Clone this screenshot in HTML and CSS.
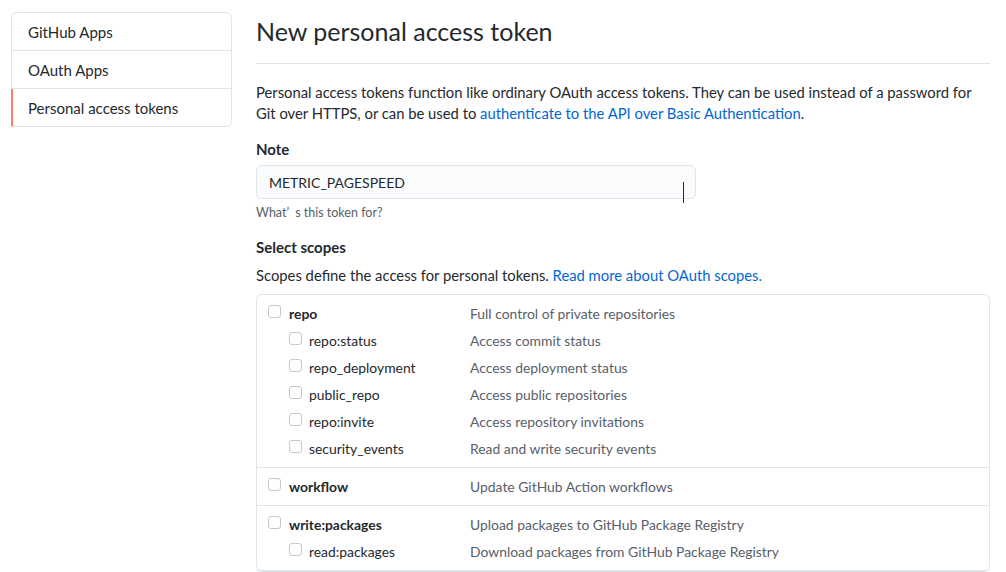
FILE: index.html
```html
<!DOCTYPE html>
<html lang="en">
<head>
<meta charset="utf-8">
<title>New personal access token</title>
<link rel="stylesheet" href="styles.css">
</head>
<body>
<div class="layout">
  <nav class="menu">
    <a class="menu-item" href="#">GitHub Apps</a>
    <a class="menu-item" href="#">OAuth Apps</a>
    <a class="menu-item selected" href="#">Personal access tokens</a>
  </nav>
  <main class="main">
    <div class="subhead">
      <h2 class="subhead-heading">New personal access token</h2>
    </div>
    <p class="intro">Personal access tokens function like ordinary OAuth access tokens. They can be used instead of a password for Git over HTTPS, or can be used to <a href="#">authenticate to the API over Basic Authentication</a>.</p>

    <div class="form-group">
      <label class="label note-label">Note</label>
      <div class="input-wrap">
        <div class="input">METRIC_PAGESPEED</div>
        <span class="ibeam"></span>
      </div>
      <p class="note">What<span class="q">’</span>s this token for?</p>
    </div>

    <div class="form-group scopes-group">
      <label class="label scopes-label">Select scopes</label>
      <p class="scopes-desc">Scopes define the access for personal tokens. <a href="#">Read more about OAuth scopes.</a></p>
    </div>

    <div class="scopes">
      <div class="scope-group">
        <div class="scope-row">
          <span class="scope-name top"><span class="cb"></span>repo</span>
          <span class="scope-desc">Full control of private repositories</span>
        </div>
        <div class="scope-row">
          <span class="scope-name sub"><span class="cb"></span>repo:status</span>
          <span class="scope-desc">Access commit status</span>
        </div>
        <div class="scope-row">
          <span class="scope-name sub"><span class="cb"></span>repo_deployment</span>
          <span class="scope-desc">Access deployment status</span>
        </div>
        <div class="scope-row">
          <span class="scope-name sub"><span class="cb"></span>public_repo</span>
          <span class="scope-desc">Access public repositories</span>
        </div>
        <div class="scope-row">
          <span class="scope-name sub"><span class="cb"></span>repo:invite</span>
          <span class="scope-desc">Access repository invitations</span>
        </div>
        <div class="scope-row">
          <span class="scope-name sub"><span class="cb"></span>security_events</span>
          <span class="scope-desc">Read and write security events</span>
        </div>
      </div>
      <div class="scope-group">
        <div class="scope-row">
          <span class="scope-name top"><span class="cb"></span>workflow</span>
          <span class="scope-desc">Update GitHub Action workflows</span>
        </div>
      </div>
      <div class="scope-group">
        <div class="scope-row">
          <span class="scope-name top"><span class="cb"></span>write:packages</span>
          <span class="scope-desc">Upload packages to GitHub Package Registry</span>
        </div>
        <div class="scope-row">
          <span class="scope-name sub"><span class="cb"></span>read:packages</span>
          <span class="scope-desc">Download packages from GitHub Package Registry</span>
        </div>
      </div>
    </div>
  </main>
</div>
</body>
</html>
```

FILE: styles.css
```css
* { box-sizing: border-box; }

html, body {
  margin: 0;
  background: #fff;
  color: #24292e;
  font-family: Lato, "Noto Sans", sans-serif;
  font-size: 15px;
  overflow: hidden;
  height: 572px;
}

a { color: #0366d6; text-decoration: none; }

.layout {
  display: flex;
  gap: 24px;
  padding: 12px 16px 0 11px;
}

.menu {
  width: 221px;
  flex: none;
  align-self: flex-start;
  border: 1px solid #e1e4e8;
  border-radius: 6px;
  display: flex;
  flex-direction: column;
}

.menu-item {
  position: relative;
  display: block;
  padding: 9px 16px 7px;
  line-height: 21px;
  color: #24292e;
  border-bottom: 1px solid #e1e4e8;
}
.menu-item:last-child { border-bottom: 0; }

.menu-item.selected::before {
  content: "";
  position: absolute;
  left: -1px;
  top: 0;
  bottom: -1px;
  width: 2px;
  background: #f9826c;
  border-bottom-left-radius: 6px;
}

.main {
  flex: 1;
  min-width: 0;
}

.subhead {
  padding-top: 1px;
  padding-bottom: 14px;
  border-bottom: 1px solid #e1e4e8;
  margin-bottom: 18px;
}

.subhead-heading {
  margin: 0;
  font-size: 25px;
  font-weight: 400;
  line-height: 36px;
}

.intro {
  margin: 0 0 15px;
  font-size: 14.8px;
  line-height: 21px;
}

.form-group { margin: 0; }

.label {
  display: block;
  font-weight: 700;
  line-height: 21px;
  margin-bottom: 6px;
}
.note-label { margin-bottom: 5px; }
.scopes-label { margin-bottom: 7px; }

.input-wrap {
  position: relative;
  width: 440px;
}

.input {
  height: 34px;
  padding: 0 12px;
  line-height: 33px;
  background: #fafbfc;
  border: 1px solid #e1e4e8;
  border-radius: 6px;
  font-size: 14px;
}

.ibeam {
  position: absolute;
  left: 427px;
  top: 17px;
  width: 1px;
  height: 21px;
  background: #24292e;
}

.note {
  margin: 5px 0 15px;
  font-size: 12.5px;
  line-height: 18px;
  color: #586069;
}
.note .q { margin-right: 6px; }

.scopes-desc {
  margin: 0 0 8px;
  font-size: 14.8px;
  line-height: 21px;
}

.scopes {
  border: 1px solid #e1e4e8;
  border-radius: 6px;
}

.scope-group {
  padding: 5px 0 5px 11px;
  border-bottom: 1px solid #e1e4e8;
}

.scope-row {
  display: grid;
  grid-template-columns: 202px 1fr;
  height: 27px;
  align-items: center;
  font-size: 13.9px;
}

.scope-name {
  display: flex;
  align-items: center;
}
.scope-name.top { font-weight: 700; }
.scope-name.sub { padding-left: 21px; }

.cb {
  width: 13px;
  height: 13px;
  border: 1px solid #c4c8cc;
  border-radius: 3px;
  background: #fff;
  margin-right: 8px;
  margin-top: -4px;
  flex: none;
}
.scope-name.sub .cb { margin-right: 7px; }

.scope-desc {
  color: #586069;
}
```
